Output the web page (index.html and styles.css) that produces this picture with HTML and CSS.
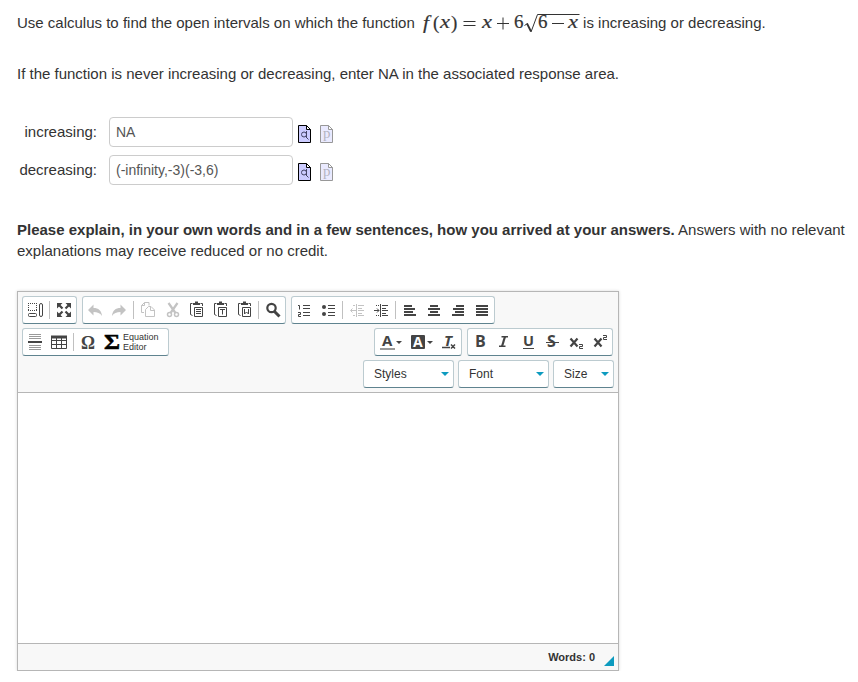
FILE: index.html
```html
<!DOCTYPE html>
<html lang="en">
<head>
  <meta charset="UTF-8" />
  <title>Question</title>
  <link rel="stylesheet" href="styles.css">
</head>
<body>

  <p class="question">Use calculus to find the open intervals on which the function
    <svg class="math" width="161" height="26" viewBox="0 0 161 26">
      <g class="math-text">
        <text class="it" x="4" y="19" textLength="6" lengthAdjust="spacingAndGlyphs">f</text>
        <text x="14" y="18.500">(</text>
        <text class="it" x="21" y="18" textLength="10" lengthAdjust="spacingAndGlyphs">x</text>
        <text x="32" y="18.500">)</text>
        <text class="it" x="63" y="18" textLength="10" lengthAdjust="spacingAndGlyphs">x</text>
        <text x="95" y="18">6</text>
        <text x="119" y="18">6</text>
        <text class="it" x="149" y="18" textLength="10" lengthAdjust="spacingAndGlyphs">x</text>
      </g>
      <path d="M44.500 11.500h12M44.500 15.500h12M78 13.500h12M84 7.500v12M133 13.500h12" stroke="#333" fill="none" />
      <path d="M105.500 15.500l3-2" stroke="#333" fill="none" />
      <path d="M108 13.500l4 8" stroke="#333" stroke-width="1.800" fill="none" />
      <path d="M112 22l6.500-17.500h42" stroke="#333" fill="none" />
    </svg>
    is increasing or decreasing.</p>

  <p class="note">If the function is never increasing or decreasing, enter NA in the associated response area.</p>

  <div class="answers">
    <div class="answer-row">
      <label for="inc">increasing:</label>
      <input type="text" id="inc" value="NA" />
      <svg class="doc" width="14" height="18" viewBox="0 0 14 18">
        <path class="page" d="M.5.500h8l4 4v13h-12z" /><path class="fold" d="M8.500.500v4h4z" />
        <circle class="ink" cx="6" cy="9.500" r="2.500" /><path class="ink" d="M8.500 6v6M8 12l2.500 2.500" />
      </svg>
      <svg class="doc faded" width="14" height="18" viewBox="0 0 14 18">
        <path class="page" d="M.5.500h8l4 4v13h-12z" /><path class="fold" d="M8.500.500v4h4z" />
        <text class="plain-p" x="3" y="13">p</text>
      </svg>
    </div>
    <div class="answer-row">
      <label for="dec">decreasing:</label>
      <input type="text" id="dec" value="(-infinity,-3)(-3,6)" />
      <svg class="doc" width="14" height="18" viewBox="0 0 14 18">
        <path class="page" d="M.5.500h8l4 4v13h-12z" /><path class="fold" d="M8.500.500v4h4z" />
        <circle class="ink" cx="6" cy="9.500" r="2.500" /><path class="ink" d="M8.500 6v6M8 12l2.500 2.500" />
      </svg>
      <svg class="doc faded" width="14" height="18" viewBox="0 0 14 18">
        <path class="page" d="M.5.500h8l4 4v13h-12z" /><path class="fold" d="M8.500.500v4h4z" />
        <text class="plain-p" x="3" y="13">p</text>
      </svg>
    </div>
  </div>

  <p class="explain"><strong>Please explain, in your own words and in a few sentences, how you arrived at your answers.</strong> Answers with no relevant explanations may receive reduced or no credit.</p>

  <div class="editor">
    <div class="toolbar">
      <div class="row">
        <div class="group">
          <svg class="icon" viewBox="0 0 24 26"><path d="M5 6.500h9M5 13.500h9M5.500 6v8M13.500 6v8" stroke-dasharray="1 1" /><rect x="5.500" y="16.500" width="8" height="3" rx="1" /><rect x="16.500" y="6.500" width="3" height="13" rx="1.500" /></svg>
          <span class="sep"></span>
          <svg class="icon" viewBox="0 0 24 26"><path class="fill" d="M5 6h5.500l-5.500 5.500zM19 6h-5.500l5.500 5.500zM5 20h5.500l-5.500-5.500zM19 20h-5.500l5.500-5.500z" /><path d="M7 8l3.500 3.500M17 8l-3.500 3.500M7 18l3.500-3.500M17 18l-3.500-3.500" stroke-width="2.200" /></svg>
        </div>
        <div class="group">
          <svg class="icon off" viewBox="0 0 24 26"><path class="fill" d="M5 13l5.500-5.500v3.500c5 0 8 2.500 8.500 8-2-3-4.500-4-8.500-4v3.500z" /></svg>
          <svg class="icon off" viewBox="0 0 24 26"><path class="fill" d="M19 13l-5.500-5.500v3.500c-5 0-8 2.500-8.500 8 2-3 4.500-4 8.500-4v3.500z" /></svg>
          <span class="sep"></span>
          <svg class="icon off" viewBox="0 0 24 26"><path d="M8 15.500h-2.500v-7l3-3h4.500v3M5.500 8.500h3v-3M9.500 12.500l3-3h2.500l3.500 3.500v6.500h-9zM14.500 9.500v4h4" /></svg>
          <svg class="icon off" viewBox="0 0 24 26"><path d="M8.500 6l7 10M17.500 6l-7 10" stroke-width="2.200" /><circle cx="9.500" cy="17.500" r="2" stroke-width="1.500" /><circle cx="16.500" cy="17.500" r="2" stroke-width="1.500" /></svg>
          <svg class="icon" viewBox="0 0 24 26"><path d="M8.500 6.500h-2v11l2 1M16.500 6.500h2v2.500M10.500 10.500h8v9h-8z" /><path d="M9 7h7M11 5.500h3" stroke-width="2" /><path d="M12 12.500h5M12 14.500h5M12 16.500h5" /></svg>
          <svg class="icon" viewBox="0 0 24 26"><path d="M8.500 6.500h-2v11l2 1M16.500 6.500h2v2.500M10.500 10.500h8v9h-8z" /><path d="M9 7h7M11 5.500h3" stroke-width="2" /><path d="M12 12.500h5M14.500 12.500v5" /></svg>
          <svg class="icon" viewBox="0 0 24 26"><path d="M8.500 6.500h-2v11l2 1M16.500 6.500h2v2.500M10.500 10.500h8v9h-8z" /><path d="M9 7h7M11 5.500h3" stroke-width="2" /><path d="M12.500 12v5l2-2 2 2v-5" /></svg>
          <span class="sep"></span>
          <svg class="icon" viewBox="0 0 24 26"><circle cx="10.500" cy="11" r="4.200" stroke-width="2.200" /><path d="M13.500 14.500l5 5" stroke-width="3" /></svg>
        </div>
        <div class="group">
          <svg class="icon" viewBox="0 0 24 26"><path d="M6 8.500h1.500v4M6 15.500h2.500v2h-2v2h2.500M11 8.500h7M11 11.500h7M11 15.500h7M11 18.500h7" /></svg>
          <svg class="icon" viewBox="0 0 24 26"><circle class="fill" cx="8" cy="10" r="2" /><circle class="fill" cx="8" cy="17" r="2" /><path d="M12 8.500h7M12 11.500h7M12 15.500h7M12 18.500h7" /></svg>
          <span class="sep"></span>
          <svg class="icon off" viewBox="0 0 24 26"><path d="M11.500 7v13M13 8.500h6M13 11.500h4M13 13.500h6M13 16.500h4M13 18.500h6M8 8.500h2M8 18.500h2M6 13.500h5M7.500 11.500l-2 2 2 2" /></svg>
          <svg class="icon" viewBox="0 0 24 26"><path d="M11.500 7v13M13 8.500h6M13 11.500h4M13 13.500h6M13 16.500h4M13 18.500h6M7 8.500h1M9 8.500h1M7 18.500h1M9 18.500h1M5 13.500h5M8 11.500l2 2-2 2" /></svg>
          <span class="sep"></span>
          <svg class="icon" viewBox="0 0 24 26"><path d="M6 9h8M6 12h11M6 15h9M6 18h12" stroke-width="2" /></svg>
          <svg class="icon" viewBox="0 0 24 26"><path d="M8 9h8M6 12h12M8 15h8M6 18h12" stroke-width="2" /></svg>
          <svg class="icon" viewBox="0 0 24 26"><path d="M10 9h8M7 12h11M9 15h9M6 18h12" stroke-width="2" /></svg>
          <svg class="icon" viewBox="0 0 24 26"><path d="M6 9h12M6 12h12M6 15h12M6 18h12" stroke-width="2" /></svg>
        </div>
      </div>

      <div class="row">
        <div class="group">
          <svg class="icon" viewBox="0 0 24 26"><path d="M6 5.500h12M6 7.500h12M6 9.500h12M6 16.500h12M6 18.500h12M6 20.500h12" stroke="#999" /><path d="M5 13h14" stroke-width="2" /></svg>
          <svg class="icon" viewBox="0 0 24 26"><path d="M4.500 7v12.500h15v-12.500M4 11.500h16M4 15.500h16M9.500 9v10M14.500 9v10" /><path d="M4 8h16" stroke-width="3" /></svg>
          <span class="sep"></span>
          <svg class="icon" viewBox="0 0 24 26"><text class="omega" x="5" y="20" textLength="14" lengthAdjust="spacingAndGlyphs">Ω</text></svg>
          <span class="equation">
            <svg width="16" height="26" viewBox="0 0 16 26"><text class="sigma" x="0" y="20" textLength="16" lengthAdjust="spacingAndGlyphs">Σ</text></svg>
            <span>Equation<br>Editor</span>
          </span>
        </div>
        <div class="group push">
          <svg class="icon wide" viewBox="0 0 31 26"><text class="glyph" x="7" y="17" font-size="15">A</text><path d="M5 20h15" stroke="#999" stroke-width="2" /><path class="fill" d="M21 12h6l-3 3z" /></svg>
          <svg class="icon wide" viewBox="0 0 31 26"><rect class="fill" x="5" y="6" width="14" height="14" rx="1" /><text class="glyph light" x="7" y="18" font-size="14">A</text><path class="fill" d="M21 12h6l-3 3z" /></svg>
          <svg class="icon" viewBox="0 0 24 26"><text class="glyph" x="7" y="17" font-size="15" font-style="italic">T</text><path d="M5 18.500h8M14 15.500l4 4M18 15.500l-4 4" stroke-width="1.500" /></svg>
        </div>
        <div class="group">
          <svg class="icon" viewBox="0 0 24 26"><text class="glyph" x="7" y="18" font-size="16">B</text></svg>
          <svg class="icon" viewBox="0 0 24 26"><path d="M9.500 7.800h6.500M7 17.200h6.500" stroke-width="1.600" /><path d="M13 7.500l-3 10" stroke-width="2.200" /></svg>
          <svg class="icon" viewBox="0 0 24 26"><text class="glyph" x="7" y="17" font-size="14.500">U</text><path d="M7 19.500h11" /></svg>
          <svg class="icon" viewBox="0 0 24 26"><text class="glyph" x="7" y="18" font-size="16">S</text><path d="M6 13.500h13" /></svg>
          <svg class="icon" viewBox="0 0 24 26"><path d="M6.500 9.500l7 8M13.500 9.500l-7 8" stroke-width="2.200" /><path d="M15 15.500h3.500v2h-3v2h3.500" /></svg>
          <svg class="icon" viewBox="0 0 24 26"><path d="M6.500 9.500l7 8M13.500 9.500l-7 8" stroke-width="2.200" /><path d="M15 6.500h3.500v2h-3v2h3.500" /></svg>
        </div>
      </div>

      <div class="row combos">
        <div class="group combo">Styles</div>
        <div class="group combo">Font</div>
        <div class="group combo small">Size</div>
      </div>
    </div>

    <div class="content"></div>

    <div class="status">
      <span>Words: 0</span>
      <i class="resizer"></i>
    </div>
  </div>

</body>
</html>
```

FILE: styles.css
```css
body {
  font-family: "Liberation Sans", Arial, sans-serif;
  font-size: 15px;
  line-height: 21px;
  color: #333;
  background: #fff;
  margin: 0;
  padding: 10px 0 0 17px;
  overflow: hidden;
}

p { margin: 0; }

.question {
  height: 26px;
  line-height: 26px;
  white-space: nowrap;
}

.math {
  vertical-align: top;
  margin-right: -1px;
}

.math-text {
  font-family: "Liberation Serif", serif;
  font-size: 19px;
  fill: #333;
  stroke: #333;
  stroke-width: 0.2px;
}

.it { font-style: italic; }

.note { margin-top: 27px; }

.answers {
  display: flex;
  flex-direction: column;
  gap: 8px;
  margin-top: 33px;
}

.answer-row {
  display: flex;
  align-items: center;
  height: 30px;
}

.answer-row label {
  width: 80px;
  padding-bottom: 2px;
  margin-right: 12px;
  text-align: right;
}

.answer-row input {
  box-sizing: border-box;
  width: 184px;
  height: 30px;
  border: 1px solid #ccc;
  border-radius: 4px;
  padding: 0 6px;
  font: 14px "Liberation Sans", Arial, sans-serif;
  color: #555;
}

.doc { margin: 3px 3px 0 5px; }

.page {
  fill: #ccf;
  stroke: #000;
}

.fold {
  fill: #fff;
  stroke: #000;
}

.ink {
  fill: none;
  stroke: #446;
}

.faded { opacity: 0.4; }

.plain-p {
  font: 15px "Liberation Serif", serif;
  fill: #446;
}

.explain { margin-top: 34px; }

/* Editor */
.editor {
  box-sizing: border-box;
  width: 602px;
  height: 380px;
  margin-top: 30px;
  border: 1px solid #b6b6b6;
  display: flex;
  flex-direction: column;
  box-shadow: 0 0 3px rgba(0, 0, 0, 0.15);
}

.toolbar {
  background: #f8f8f8;
  border-bottom: 1px solid #b6b6b6;
  padding: 4px 5px 4px 4px;
  display: flex;
  flex-direction: column;
  gap: 4px;
}

.row {
  display: flex;
  gap: 5px;
}

.group {
  box-sizing: border-box;
  display: flex;
  height: 28px;
  background: #fff;
  border: 1px solid #bccbd0;
  border-bottom-color: #5f838f;
  border-radius: 3px;
}

.push { margin-left: auto; }

.icon {
  width: 24px;
  height: 26px;
  flex: none;
  fill: none;
  stroke: #444;
}

.wide { width: 31px; }

.off { stroke: #c3c3c3; }

.fill {
  fill: #444;
  stroke: none;
}

.off .fill { fill: #c3c3c3; }

.sep {
  width: 1px;
  height: 18px;
  margin: 4px 2px;
  background: #c0c0c0;
}

.glyph {
  font-family: "Open Sans", "Liberation Sans", sans-serif;
  font-weight: bold;
  fill: #444;
  stroke: none;
}

.light { fill: #fff; }

.omega {
  font: bold 19px "Liberation Serif", serif;
  fill: #444;
  stroke: none;
}

.equation {
  display: flex;
  width: 68px;
  padding-left: 4px;
  box-sizing: border-box;
  gap: 3px;
  font-size: 9px;
  line-height: 10px;
}

.equation span { padding-top: 3px; }

.sigma {
  font: bold 20px "Liberation Serif", serif;
  fill: #000;
  stroke: #000;
  stroke-width: 0.5px;
}

.combos {
  justify-content: flex-end;
  gap: 4px;
  margin-right: -1px;
}

.combo {
  width: 91px;
  padding: 0 4px 0 10px;
  justify-content: space-between;
  align-items: center;
  font-size: 12px;
}

.combo::after {
  content: "";
  border: 4px solid transparent;
  border-top-color: #0d9bbf;
  border-bottom: 0;
}

.small { width: 61px; }

.content {
  flex: 1;
  background: #fff;
}

.status {
  box-sizing: border-box;
  height: 27px;
  background: #f8f8f8;
  border-top: 1px solid #b6b6b6;
  display: flex;
  justify-content: flex-end;
  padding-right: 4px;
  font-size: 11px;
  font-weight: bold;
  line-height: 26px;
}

.resizer {
  width: 0;
  height: 0;
  margin: 12px 0 0 9px;
  border: 5px solid transparent;
  border-right-color: #0d9bbf;
  border-bottom-color: #0d9bbf;
}
```
